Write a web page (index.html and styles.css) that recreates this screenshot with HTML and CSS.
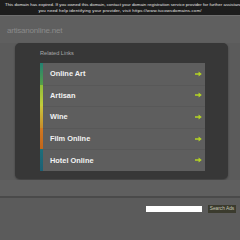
FILE: index.html
```html
<!DOCTYPE html>
<html>
<head>
<meta charset="utf-8">
<link rel="stylesheet" href="styles.css">
</head>
<body>
<div class="notice">
  <div class="notice-line first">This domain has expired. If you owned this domain, contact your domain registration service provider for further assistance. If</div>
  <div class="notice-line">you need help identifying your provider, visit https://www.tucowsdomains.com/</div>
</div>
<div class="header"><div class="domain">artisanonline.net</div></div>
<div class="panel">
  <div class="label">Related Links</div>
  <ul class="links">
    <li class="link c1"><span>Online Art</span><svg class="arrow" viewBox="0 0 7 6"><path d="M0 2.2h3.6V0.4L6.8 3 3.6 5.6V3.8H0z" fill="#b4d424"/></svg></li>
    <li class="link c2"><span>Artisan</span><svg class="arrow" viewBox="0 0 7 6"><path d="M0 2.2h3.6V0.4L6.8 3 3.6 5.6V3.8H0z" fill="#b4d424"/></svg></li>
    <li class="link c3"><span>Wine</span><svg class="arrow" viewBox="0 0 7 6"><path d="M0 2.2h3.6V0.4L6.8 3 3.6 5.6V3.8H0z" fill="#b4d424"/></svg></li>
    <li class="link c4"><span>Film Online</span><svg class="arrow" viewBox="0 0 7 6"><path d="M0 2.2h3.6V0.4L6.8 3 3.6 5.6V3.8H0z" fill="#b4d424"/></svg></li>
    <li class="link c5"><span>Hotel Online</span><svg class="arrow" viewBox="0 0 7 6"><path d="M0 2.2h3.6V0.4L6.8 3 3.6 5.6V3.8H0z" fill="#b4d424"/></svg></li>
  </ul>
</div>
<div class="footer"></div>
<div class="search">
  <input class="search-input" type="text">
  <button class="search-btn">Search Ads</button>
</div>
</body>
</html>
```
FILE: styles.css
```css
html, body {
  margin: 0;
  padding: 0;
}
body {
  background: #5b5b5b;
  font-family: "Liberation Sans", Arial, sans-serif;
  width: 240px;
  height: 240px;
  overflow: hidden;
}
.notice {
  height: 13px;
  padding-top: 2px;
  background: #1d1d1d;
  border-bottom: 1px solid #6e6e6e;
  color: #e8e8e8;
  font-size: 4.3px;
  letter-spacing: 0.2px;
  line-height: 5.6px;
  text-align: center;
  overflow: hidden;
}
.notice-line {
  white-space: nowrap;
}
.notice-line.first {
  text-align: left;
  padding-left: 5px;
  letter-spacing: 0.05px;
}
.header {
  height: 27px;
  background: #5f5f5f;
  box-sizing: border-box;
  padding: 10px 0 0 7px;
}
.domain {
  color: #8a8a8a;
  font-size: 8px;
  line-height: 9px;
  letter-spacing: -0.2px;
}
.panel {
  margin-left: 15px;
  width: 213px;
  height: 136px;
  box-sizing: border-box;
  background: #373737;
  border-radius: 5px;
  box-shadow: 0 1px 2px rgba(0,0,0,0.35);
  padding: 7px 23px 0 25px;
}
.label {
  color: #a8a8a8;
  font-size: 5.6px;
  line-height: 7px;
  height: 13px;
}
.links {
  list-style: none;
  margin: 0;
  padding: 0;
}
.link {
  height: 21.6px;
  box-sizing: border-box;
  background: #5e5e5e;
  border-left: 3px solid #2a8a6c;
  display: flex;
  align-items: center;
  justify-content: space-between;
  padding: 0 3px 0 7px;
  color: #f2f2f2;
  font-weight: bold;
  font-size: 7.4px;
}
.link + .link {
  box-shadow: inset 0 1px 0 #585858;
}
.c1 { border-image: linear-gradient(#1f7f74, #58a046) 1; }
.c2 { border-image: linear-gradient(#8cbc3a, #c6cf3a) 1; }
.c3 { border-image: linear-gradient(#c9c83c, #c98a2a) 1; }
.c4 { border-image: linear-gradient(#d37a22, #c0641a) 1; }
.c5 { border-image: linear-gradient(#1d6f7a, #1b5f74) 1; }
.arrow {
  width: 7px;
  height: 6px;
  display: block;
}
.footer {
  height: 16px;
  margin-top: 1px;
  background: #5f5f5f;
  border-bottom: 2px solid #4a4a4a;
}
.search {
  display: flex;
  justify-content: flex-end;
  align-items: center;
  gap: 6px;
  padding: 7px 4px 0 0;
}
.search-input {
  width: 56px;
  height: 6px;
  box-sizing: content-box;
  padding: 0;
  margin: 0;
  border: 0;
  background: #ffffff;
}
.search-btn {
  height: 8px;
  width: 28px;
  padding: 0;
  margin: 0;
  border: 0;
  background: #3b3b2e;
  color: #c8c8b8;
  font-family: "Liberation Sans", Arial, sans-serif;
  font-size: 4.8px;
  line-height: 8px;
}
```
